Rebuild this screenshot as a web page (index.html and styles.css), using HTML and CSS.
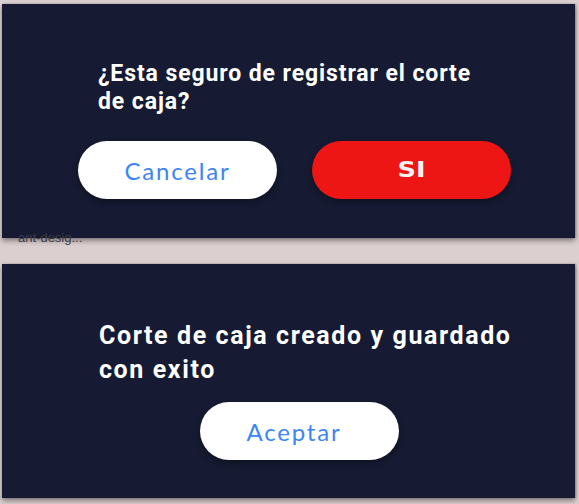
FILE: index.html
```html
<!DOCTYPE html>
<html lang="es">
<head>
<meta charset="utf-8">
<title>Corte de caja</title>
<link rel="stylesheet" href="styles.css">
</head>
<body>
  <div class="stack">
    <section class="panel panel-confirm">
      <h2 class="title title-confirm">¿Esta seguro de registrar el corte de caja?</h2>
      <div class="actions">
        <button class="btn btn-light">Cancelar</button>
        <button class="btn btn-red"><span class="si">SI</span></button>
      </div>
      <span class="alt-text">ant-desig...</span>
    </section>
    <section class="panel panel-done">
      <h2 class="title title-done">Corte de caja creado y guardado con exito</h2>
      <div class="actions actions-single">
        <button class="btn btn-light btn-accept">Aceptar</button>
      </div>
    </section>
  </div>
</body>
</html>
```

FILE: styles.css
```css
html, body {
  margin: 0;
  padding: 0;
}
body {
  background: #dbd0cf;
  width: 579px;
  height: 504px;
  overflow: hidden;
  font-family: Roboto, "Liberation Sans", sans-serif;
}
.stack {
  display: flex;
  flex-direction: column;
  gap: 26px;
  padding: 4px 4px 0 2px;
}
.panel {
  position: relative;
  background: #161b33;
  box-shadow: 0 3px 5px rgba(40, 30, 40, 0.45), 1px 0 2px rgba(60, 50, 60, 0.35);
  display: flex;
  flex-direction: column;
}
.panel-confirm {
  height: 234px;
  box-sizing: border-box;
  padding: 56px 0 0 96px;
}
.panel-done {
  height: 234px;
  box-sizing: border-box;
  padding: 55px 0 0 97px;
}
.title {
  margin: 0;
  color: #ffffff;
  font-weight: 700;
}
.title-confirm {
  font-size: 23px;
  line-height: 28px;
  letter-spacing: 0.9px;
  width: 395px;
}
.title-done {
  font-size: 25px;
  line-height: 34px;
  letter-spacing: 1.6px;
  width: 430px;
}
.actions {
  display: flex;
  gap: 35px;
  margin-top: 25px;
  margin-left: -20px;
}
.actions-single {
  margin-top: 15px;
  margin-left: 101px;
}
.btn {
  width: 199px;
  height: 58px;
  border: none;
  border-radius: 29px;
  box-shadow: 0 3px 6px rgba(0, 0, 0, 0.35);
  display: flex;
  align-items: center;
  justify-content: center;
  padding: 0;
}
.btn-light {
  background: #ffffff;
  color: #3d85f6;
  font-family: Lato, "Open Sans", sans-serif;
  font-size: 24px;
  font-weight: 400;
  letter-spacing: 1.8px;
}
.btn-accept {
  padding-right: 11px;
}
.btn-red {
  background: #ee1515;
  color: #f2f2f2;
  font-family: "DejaVu Sans", sans-serif;
  font-size: 21px;
  font-weight: 900;
}
.si {
  display: inline-block;
  transform: scaleX(1.22);
}
.alt-text {
  position: absolute;
  left: 16px;
  bottom: -7px;
  font-family: "Liberation Sans", sans-serif;
  font-size: 13px;
  color: #3a3a44;
}
```
